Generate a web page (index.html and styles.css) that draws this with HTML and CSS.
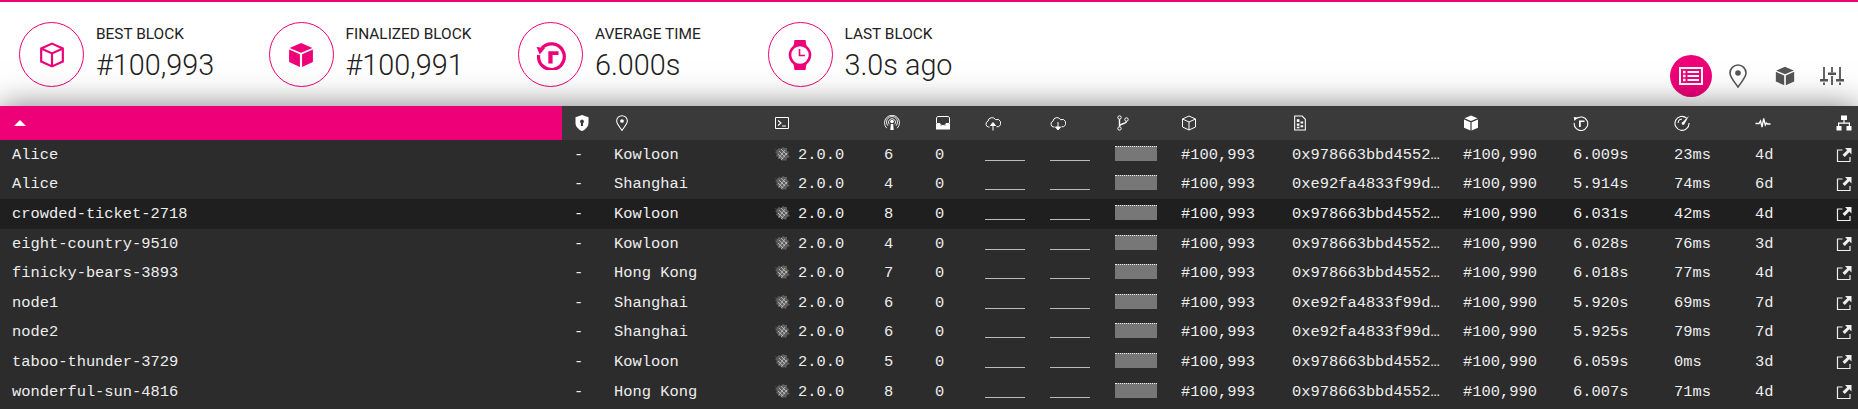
FILE: index.html
```html
<!doctype html>
<html lang="en">
<head>
    <meta charset="UTF-8">
    <title>Telemetry</title>
    <link rel="stylesheet" href="styles.css">
</head>
<body>
<svg class="defs" width="0" height="0">
    <symbol id="i-cube" viewBox="0 0 24 24">
        <path d="M12 1.500 22 6v12l-10 4.500L2 18V6z M2 6l10 4.500L22 6 M12 10.500V22.500" fill="none" stroke="currentColor" stroke-width="2"/>
    </symbol>
    <symbol id="i-cube-solid" viewBox="0 0 24 24">
        <path d="M12 1 1.500 5.500 12 10l10.500-4.500z M1 7l10 4.300V23L1 18.500z M13 11.300 23 7v11.500L13 23z" fill="currentColor"/>
    </symbol>
    <symbol id="i-time" viewBox="0 0 28 28">
        <path d="M5.500 7.500a12 12 0 1 1-3 6.500" fill="none" stroke="currentColor" stroke-width="3"/>
        <path d="M0.500 6.500 8.500 7.500 3.500 13.500z M11.500 10.500H21V14h-5.500v8h-4z" fill="currentColor"/>
    </symbol>
    <symbol id="i-watch" viewBox="0 0 24 30">
        <path d="M6.500 0h11l1 6H5.500z M5.500 24h13l-1 6h-11z" fill="currentColor"/>
        <circle cx="12" cy="15" r="10" fill="#fff" stroke="currentColor" stroke-width="2.600"/>
        <path d="M11.500 9v6.500H17" fill="none" stroke="currentColor" stroke-width="1.600"/>
    </symbol>
    <symbol id="i-list" viewBox="0 0 24 18">
        <path d="M1 1h22v16H1z" fill="none" stroke="currentColor" stroke-width="2"/>
        <path d="M4 3.800h2.500v2.500H4z M8.500 4.100H20v1.800H8.500z M4 7.800h2.500v2.500H4z M8.500 8.100H20v1.800H8.500z M4 11.800h2.500v2.500H4z M8.500 12.100H20v1.800H8.500z" fill="currentColor"/>
    </symbol>
    <symbol id="i-pin" viewBox="0 0 24 24">
        <path d="M12 23C7 16 4 13 4 9a8 8 0 0 1 16 0c0 4-3 7-8 14z" fill="none" stroke="currentColor" stroke-width="1.600"/>
        <circle cx="12" cy="9" r="2.800" fill="currentColor"/>
    </symbol>
    <symbol id="i-sliders" viewBox="0 0 24 24">
        <path d="M4 3v12 M4 18.500V21 M12 3v5.500 M12 12v9 M20 3v12 M20 18.500V21" fill="none" stroke="currentColor" stroke-width="1.800"/>
        <path d="M0 15h8v2.500H0z M8 8.500h8V11H8z M16 15h8v2.500h-8z" fill="currentColor"/>
    </symbol>
    <symbol id="i-shield" viewBox="0 0 16 16">
        <path d="M8 0 14.500 2.200V8c0 3.800-3 6.500-6.500 8-3.500-1.500-6.500-4.200-6.500-8V2.200z M8 4.500a2 2 0 0 0-1 3.700V11h2V8.200a2 2 0 0 0-1-3.700z" fill="currentColor" fill-rule="evenodd"/>
    </symbol>
    <symbol id="i-term" viewBox="0 0 16 16">
        <path d="M1.500 2.500h13v11h-13z" fill="none" stroke="currentColor"/>
        <path d="M4 5.500l3 2.500-3 2.500 M8 11h4" fill="none" stroke="currentColor" stroke-width="1.100"/>
    </symbol>
    <symbol id="i-peers" viewBox="0 0 16 16">
        <circle cx="8" cy="6.500" r="1.800" fill="currentColor"/>
        <path d="M6.800 9h2.400l.5 6H6.300z" fill="currentColor"/>
        <path d="M4 10.800a5.500 5.500 0 1 1 8 0 M5.200 9.300a3.500 3.500 0 1 1 5.600 0 M2.800 13.200a7.500 7.500 0 1 1 10.400 0" fill="none" stroke="currentColor" stroke-width=".9"/>
    </symbol>
    <symbol id="i-tray" viewBox="0 0 16 16">
        <path d="M2.500 1.500h11l1 1.500v5.500H11c-.5 1.500-1.500 2-3 2s-2.500-.5-3-2H1.500V3z" fill="none" stroke="currentColor"/>
        <path d="M1 9h3.700c.6 1.400 1.700 2 3.300 2s2.700-.6 3.300-2H15v5.500H1z" fill="currentColor"/>
    </symbol>
    <symbol id="i-up" viewBox="0 0 16 16">
        <path d="M4.500 12H3.500a3 3 0 0 1-.5-5.800 4 4 0 0 1 7.500-1.500 3.300 3.300 0 0 1 3 7H11.500" fill="none" stroke="currentColor"/>
        <path d="M8 15.500v-5 M5.500 10.500 8 7.500l2.500 3z" fill="currentColor" stroke="currentColor"/>
    </symbol>
    <symbol id="i-down" viewBox="0 0 16 16">
        <path d="M4.500 12H3.500a3 3 0 0 1-.5-5.800 4 4 0 0 1 7.500-1.500 3.300 3.300 0 0 1 3 7H11.500" fill="none" stroke="currentColor"/>
        <path d="M8 7v5 M5.500 12 8 15l2.500-3z" fill="currentColor" stroke="currentColor"/>
    </symbol>
    <symbol id="i-branch" viewBox="0 0 16 16">
        <circle cx="4.500" cy="2.500" r="1.700" fill="none" stroke="currentColor"/>
        <circle cx="4.500" cy="13.500" r="1.700" fill="none" stroke="currentColor"/>
        <circle cx="11.500" cy="4.500" r="1.700" fill="none" stroke="currentColor"/>
        <path d="M4.500 4.200v7.600 M11.500 6.200C11.500 9 5 8.500 4.500 11" fill="none" stroke="currentColor" stroke-width="1.400"/>
    </symbol>
    <symbol id="i-cube-thin" viewBox="0 0 16 16">
        <path d="M8 1 14.500 4v8L8 15 1.500 12V4z M1.500 4 8 7l6.500-3 M8 7v8" fill="none" stroke="currentColor"/>
    </symbol>
    <symbol id="i-doc" viewBox="0 0 12 15">
        <path d="M1 1h7l3 3v10H1z" fill="none" stroke="currentColor"/>
        <path d="M3 4h2.500v2.500H3z M6.500 6h2.500v2H6.500z M3 8h2.500v2H3z M6.500 9.500H9v2H6.500z M3 11h2.500v1.500H3z" fill="currentColor"/>
    </symbol>
    <symbol id="i-cube-fill" viewBox="0 0 16 16">
        <path d="M8 .5 1.500 3.300 8 6l6.500-2.700z M1 4.500 7.400 7.200V15.500L1 12.800z M8.600 7.200 15 4.500v8.300l-6.400 2.700z" fill="currentColor"/>
    </symbol>
    <symbol id="i-time-thin" viewBox="0 0 16 16">
        <path d="M3.400 3.700A6.800 6.800 0 1 1 1.200 8" fill="none" stroke="currentColor" stroke-width="1.100"/>
        <path d="M.8 2 4.800 2.500 1.500 6z M6 5.500h5.500v1.600H7.800V12H6z" fill="currentColor"/>
    </symbol>
    <symbol id="i-gauge" viewBox="0 0 16 16">
        <path d="M12.500 3A7 7 0 1 0 15 8" fill="none" stroke="currentColor" stroke-width="1.100"/>
        <path d="M15 .8 8.800 7a1.500 1.500 0 1 0 1.800 1.800z" fill="currentColor"/>
        <path d="M4 8a4 4 0 0 1 4-4" fill="none" stroke="currentColor"/>
    </symbol>
    <symbol id="i-pulse" viewBox="0 0 16 16">
        <path d="M.5 8.500H4L5.500 6l1.500 6 1.700-8.500L10.300 10l1.200-2 1 1H15.500" fill="none" stroke="currentColor" stroke-width="1.300"/>
    </symbol>
    <symbol id="i-net" viewBox="0 0 16 16">
        <path d="M5 .5h6v4.500H5z M.5 11h5v4.500h-5z M10.500 11h5v4.500h-5z M7.400 5h1.200v2.500H14V11h-1.200V8.700H3.200V11H2V7.500h5.400z" fill="currentColor"/>
    </symbol>
    <symbol id="i-link" viewBox="0 0 16 16">
        <path d="M6.500 3H1.500v11.500h12.500V10" fill="none" stroke="currentColor" stroke-width="1.200"/>
        <path d="M9 1h6.500v6.500L13.300 5.300 8.800 10 6.500 7.700 11.200 3.200z" fill="currentColor"/>
    </symbol>
    <symbol id="i-p2p" viewBox="0 0 16 16">
        <path d="M0 3 3 4 5 2l2 1 2-2 2 1 2 0 0 3 2 1-1 3 2 2-3 1-1 3-2-1-2 1-1-2-3 0 0-2-2-1 1-2-2-2 2-1z" fill="#5e5e5e"/>
        <path d="M5 5l6 6 M7 3l6 6 M4 8l5 5 M11 4l-6 8 M13 7l-6 7" fill="none" stroke="#c4c4c4" stroke-width=".8"/>
    </symbol>
</svg>

<header class="top">
    <div class="stat">
        <div class="stat_icon"><svg><use href="#i-cube"/></svg></div>
        <div><div class="stat_label">BEST BLOCK</div><div class="stat_value">#100,993</div></div>
    </div>
    <div class="stat">
        <div class="stat_icon"><svg><use href="#i-cube-solid"/></svg></div>
        <div><div class="stat_label">FINALIZED BLOCK</div><div class="stat_value">#100,991</div></div>
    </div>
    <div class="stat">
        <div class="stat_icon"><svg class="icon_tall"><use href="#i-time"/></svg></div>
        <div><div class="stat_label">AVERAGE TIME</div><div class="stat_value">6.000s</div></div>
    </div>
    <div class="stat">
        <div class="stat_icon"><svg class="icon_tall"><use href="#i-watch"/></svg></div>
        <div><div class="stat_label">LAST BLOCK</div><div class="stat_value">3.0s ago</div></div>
    </div>
    <nav class="tabs">
        <div class="tab tab_active"><svg><use href="#i-list"/></svg></div>
        <div class="tab"><svg><use href="#i-pin"/></svg></div>
        <div class="tab tab_cube"><svg><use href="#i-cube-solid"/></svg></div>
        <div class="tab"><svg><use href="#i-sliders"/></svg></div>
    </nav>
</header>

<main class="list">
<table class="nodes">
    <colgroup>
        <col class="c_name"><col class="c_val"><col class="c_loc"><col class="c_impl"><col class="c_peers"><col class="c_pend">
        <col class="c_net"><col class="c_net"><col class="c_prop"><col class="c_block"><col class="c_hash"><col class="c_fin">
        <col class="c_time"><col class="c_lat"><col class="c_up"><col class="c_link">
    </colgroup>
    <thead>
    <tr>
        <th class="th_sort"><span class="sort_arrow"></span></th>
        <th><svg><use href="#i-shield"/></svg></th>
        <th><svg><use href="#i-pin"/></svg></th>
        <th><svg><use href="#i-term"/></svg></th>
        <th><svg><use href="#i-peers"/></svg></th>
        <th><svg><use href="#i-tray"/></svg></th>
        <th><svg><use href="#i-up"/></svg></th>
        <th><svg><use href="#i-down"/></svg></th>
        <th><svg><use href="#i-branch"/></svg></th>
        <th><svg><use href="#i-cube-thin"/></svg></th>
        <th><svg><use href="#i-doc"/></svg></th>
        <th><svg><use href="#i-cube-fill"/></svg></th>
        <th><svg><use href="#i-time-thin"/></svg></th>
        <th><svg><use href="#i-gauge"/></svg></th>
        <th><svg><use href="#i-pulse"/></svg></th>
        <th><svg><use href="#i-net"/></svg></th>
    </tr>
    </thead>
    <tbody>
    <tr>
        <td>Alice</td><td>-</td><td>Kowloon</td>
        <td><svg class="impl"><use href="#i-p2p"/></svg>2.0.0</td><td>6</td><td>0</td>
        <td><div class="spark"></div></td><td><div class="spark"></div></td><td><div class="prop"></div></td>
        <td>#100,993</td><td>0x978663bbd4552…</td><td>#100,990</td><td>6.009s</td><td>23ms</td><td>4d</td>
        <td><svg><use href="#i-link"/></svg></td>
    </tr>
    <tr>
        <td>Alice</td><td>-</td><td>Shanghai</td>
        <td><svg class="impl"><use href="#i-p2p"/></svg>2.0.0</td><td>4</td><td>0</td>
        <td><div class="spark"></div></td><td><div class="spark"></div></td><td><div class="prop"></div></td>
        <td>#100,993</td><td>0xe92fa4833f99d…</td><td>#100,990</td><td>5.914s</td><td>74ms</td><td>6d</td>
        <td><svg><use href="#i-link"/></svg></td>
    </tr>
    <tr class="row_hover">
        <td>crowded-ticket-2718</td><td>-</td><td>Kowloon</td>
        <td><svg class="impl"><use href="#i-p2p"/></svg>2.0.0</td><td>8</td><td>0</td>
        <td><div class="spark"></div></td><td><div class="spark"></div></td><td><div class="prop"></div></td>
        <td>#100,993</td><td>0x978663bbd4552…</td><td>#100,990</td><td>6.031s</td><td>42ms</td><td>4d</td>
        <td><svg><use href="#i-link"/></svg></td>
    </tr>
    <tr>
        <td>eight-country-9510</td><td>-</td><td>Kowloon</td>
        <td><svg class="impl"><use href="#i-p2p"/></svg>2.0.0</td><td>4</td><td>0</td>
        <td><div class="spark"></div></td><td><div class="spark"></div></td><td><div class="prop"></div></td>
        <td>#100,993</td><td>0x978663bbd4552…</td><td>#100,990</td><td>6.028s</td><td>76ms</td><td>3d</td>
        <td><svg><use href="#i-link"/></svg></td>
    </tr>
    <tr>
        <td>finicky-bears-3893</td><td>-</td><td>Hong Kong</td>
        <td><svg class="impl"><use href="#i-p2p"/></svg>2.0.0</td><td>7</td><td>0</td>
        <td><div class="spark"></div></td><td><div class="spark"></div></td><td><div class="prop"></div></td>
        <td>#100,993</td><td>0x978663bbd4552…</td><td>#100,990</td><td>6.018s</td><td>77ms</td><td>4d</td>
        <td><svg><use href="#i-link"/></svg></td>
    </tr>
    <tr>
        <td>node1</td><td>-</td><td>Shanghai</td>
        <td><svg class="impl"><use href="#i-p2p"/></svg>2.0.0</td><td>6</td><td>0</td>
        <td><div class="spark"></div></td><td><div class="spark"></div></td><td><div class="prop"></div></td>
        <td>#100,993</td><td>0xe92fa4833f99d…</td><td>#100,990</td><td>5.920s</td><td>69ms</td><td>7d</td>
        <td><svg><use href="#i-link"/></svg></td>
    </tr>
    <tr>
        <td>node2</td><td>-</td><td>Shanghai</td>
        <td><svg class="impl"><use href="#i-p2p"/></svg>2.0.0</td><td>6</td><td>0</td>
        <td><div class="spark"></div></td><td><div class="spark"></div></td><td><div class="prop"></div></td>
        <td>#100,993</td><td>0xe92fa4833f99d…</td><td>#100,990</td><td>5.925s</td><td>79ms</td><td>7d</td>
        <td><svg><use href="#i-link"/></svg></td>
    </tr>
    <tr>
        <td>taboo-thunder-3729</td><td>-</td><td>Kowloon</td>
        <td><svg class="impl"><use href="#i-p2p"/></svg>2.0.0</td><td>5</td><td>0</td>
        <td><div class="spark"></div></td><td><div class="spark"></div></td><td><div class="prop"></div></td>
        <td>#100,993</td><td>0x978663bbd4552…</td><td>#100,990</td><td>6.059s</td><td>0ms</td><td>3d</td>
        <td><svg><use href="#i-link"/></svg></td>
    </tr>
    <tr>
        <td>wonderful-sun-4816</td><td>-</td><td>Hong Kong</td>
        <td><svg class="impl"><use href="#i-p2p"/></svg>2.0.0</td><td>8</td><td>0</td>
        <td><div class="spark"></div></td><td><div class="spark"></div></td><td><div class="prop"></div></td>
        <td>#100,993</td><td>0x978663bbd4552…</td><td>#100,990</td><td>6.007s</td><td>71ms</td><td>4d</td>
        <td><svg><use href="#i-link"/></svg></td>
    </tr>
    </tbody>
</table>
</main>
</body>
</html>
```

FILE: styles.css
```css
* {
    box-sizing: border-box;
}

html, body {
    margin: 0;
    height: 409px;
    overflow: hidden;
}

body {
    background-color: #2c2c2c;
    font-family: Roboto, sans-serif;
}

.defs {
    position: absolute;
}

.top {
    display: flex;
    height: 106px;
    padding: 20px 0 0 19px;
    background-color: #fff;
    border-top: 2px solid #ee0078;
}

.stat {
    display: flex;
    width: 249.5px;
    height: 65px;
    color: #222;
}

.stat_icon {
    display: flex;
    justify-content: center;
    align-items: center;
    width: 65px;
    height: 65px;
    margin-right: 12px;
    border: 1px solid #ee0078;
    border-radius: 50%;
    color: #ee0078;
}

.stat_icon svg {
    width: 26px;
    height: 26px;
}

.stat_icon .icon_tall {
    width: 30px;
    height: 30px;
}

.stat_label {
    margin-top: 2px;
    font-size: 15.4px;
    line-height: 20px;
    color: #222;
}

.stat_value {
    font-size: 28.8px;
    font-weight: 300;
    line-height: 42px;
}

.tabs {
    display: flex;
    align-self: flex-end;
    align-items: center;
    gap: 5px;
    margin-left: auto;
    margin-right: 5px;
    margin-bottom: 9px;
}

.tab {
    display: flex;
    justify-content: center;
    align-items: center;
    width: 42px;
    height: 42px;
    border-radius: 50%;
    color: #555;
}

.tab svg {
    width: 24px;
    height: 24px;
}

.tab_cube svg {
    width: 20px;
    height: 20px;
}

.tab_active {
    background-color: #ee0078;
    color: #fff;
}

.list {
    position: relative;
    height: 303px;
    overflow: visible;
    box-shadow: 0 0 30px rgba(0, 0, 0, 0.5);
}

.nodes {
    width: 100%;
    table-layout: fixed;
    border-collapse: collapse;
    font-family: "Liberation Mono", monospace;
    font-size: 15.4px;
    color: #eee;
}

.c_name { width: 562px; }
.c_val { width: 40px; }
.c_loc { width: 160px; }
.c_impl { width: 110px; }
.c_peers { width: 51px; }
.c_pend { width: 50px; }
.c_net { width: 65px; }
.c_prop { width: 66px; }
.c_block { width: 111px; }
.c_hash { width: 171px; }
.c_fin { width: 110px; }
.c_time { width: 101px; }
.c_lat { width: 81px; }
.c_up { width: 81px; }
.c_link { width: 34px; }

th {
    height: 34px;
    padding: 0 0 0 12px;
    background-color: #3a3a3a;
    text-align: left;
    color: #fff;
}

th svg {
    display: block;
    width: 16px;
    height: 16px;
}

.th_sort {
    background-color: #ee0078;
}

.sort_arrow {
    display: block;
    width: 0;
    height: 0;
    margin-left: 2px;
    border-left: 6px solid transparent;
    border-right: 6px solid transparent;
    border-bottom: 6px solid #fff;
}

td {
    height: 29.6px;
    padding: 0 0 0 12px;
    line-height: 18px;
    white-space: nowrap;
    overflow: hidden;
}

td svg {
    display: block;
    width: 16px;
    height: 16px;
}

td .impl {
    display: inline-block;
    margin-right: 8px;
    vertical-align: -3px;
}

.row_hover td {
    background-color: #1f1f1f;
}

.spark {
    width: 40px;
    height: 15px;
    margin-bottom: 3px;
    border-bottom: 1px solid #bbb;
}

.prop {
    width: 42px;
    height: 15px;
    margin-bottom: 3px;
    background-color: #777;
    border-top: 1px dotted #eee;
}
```
